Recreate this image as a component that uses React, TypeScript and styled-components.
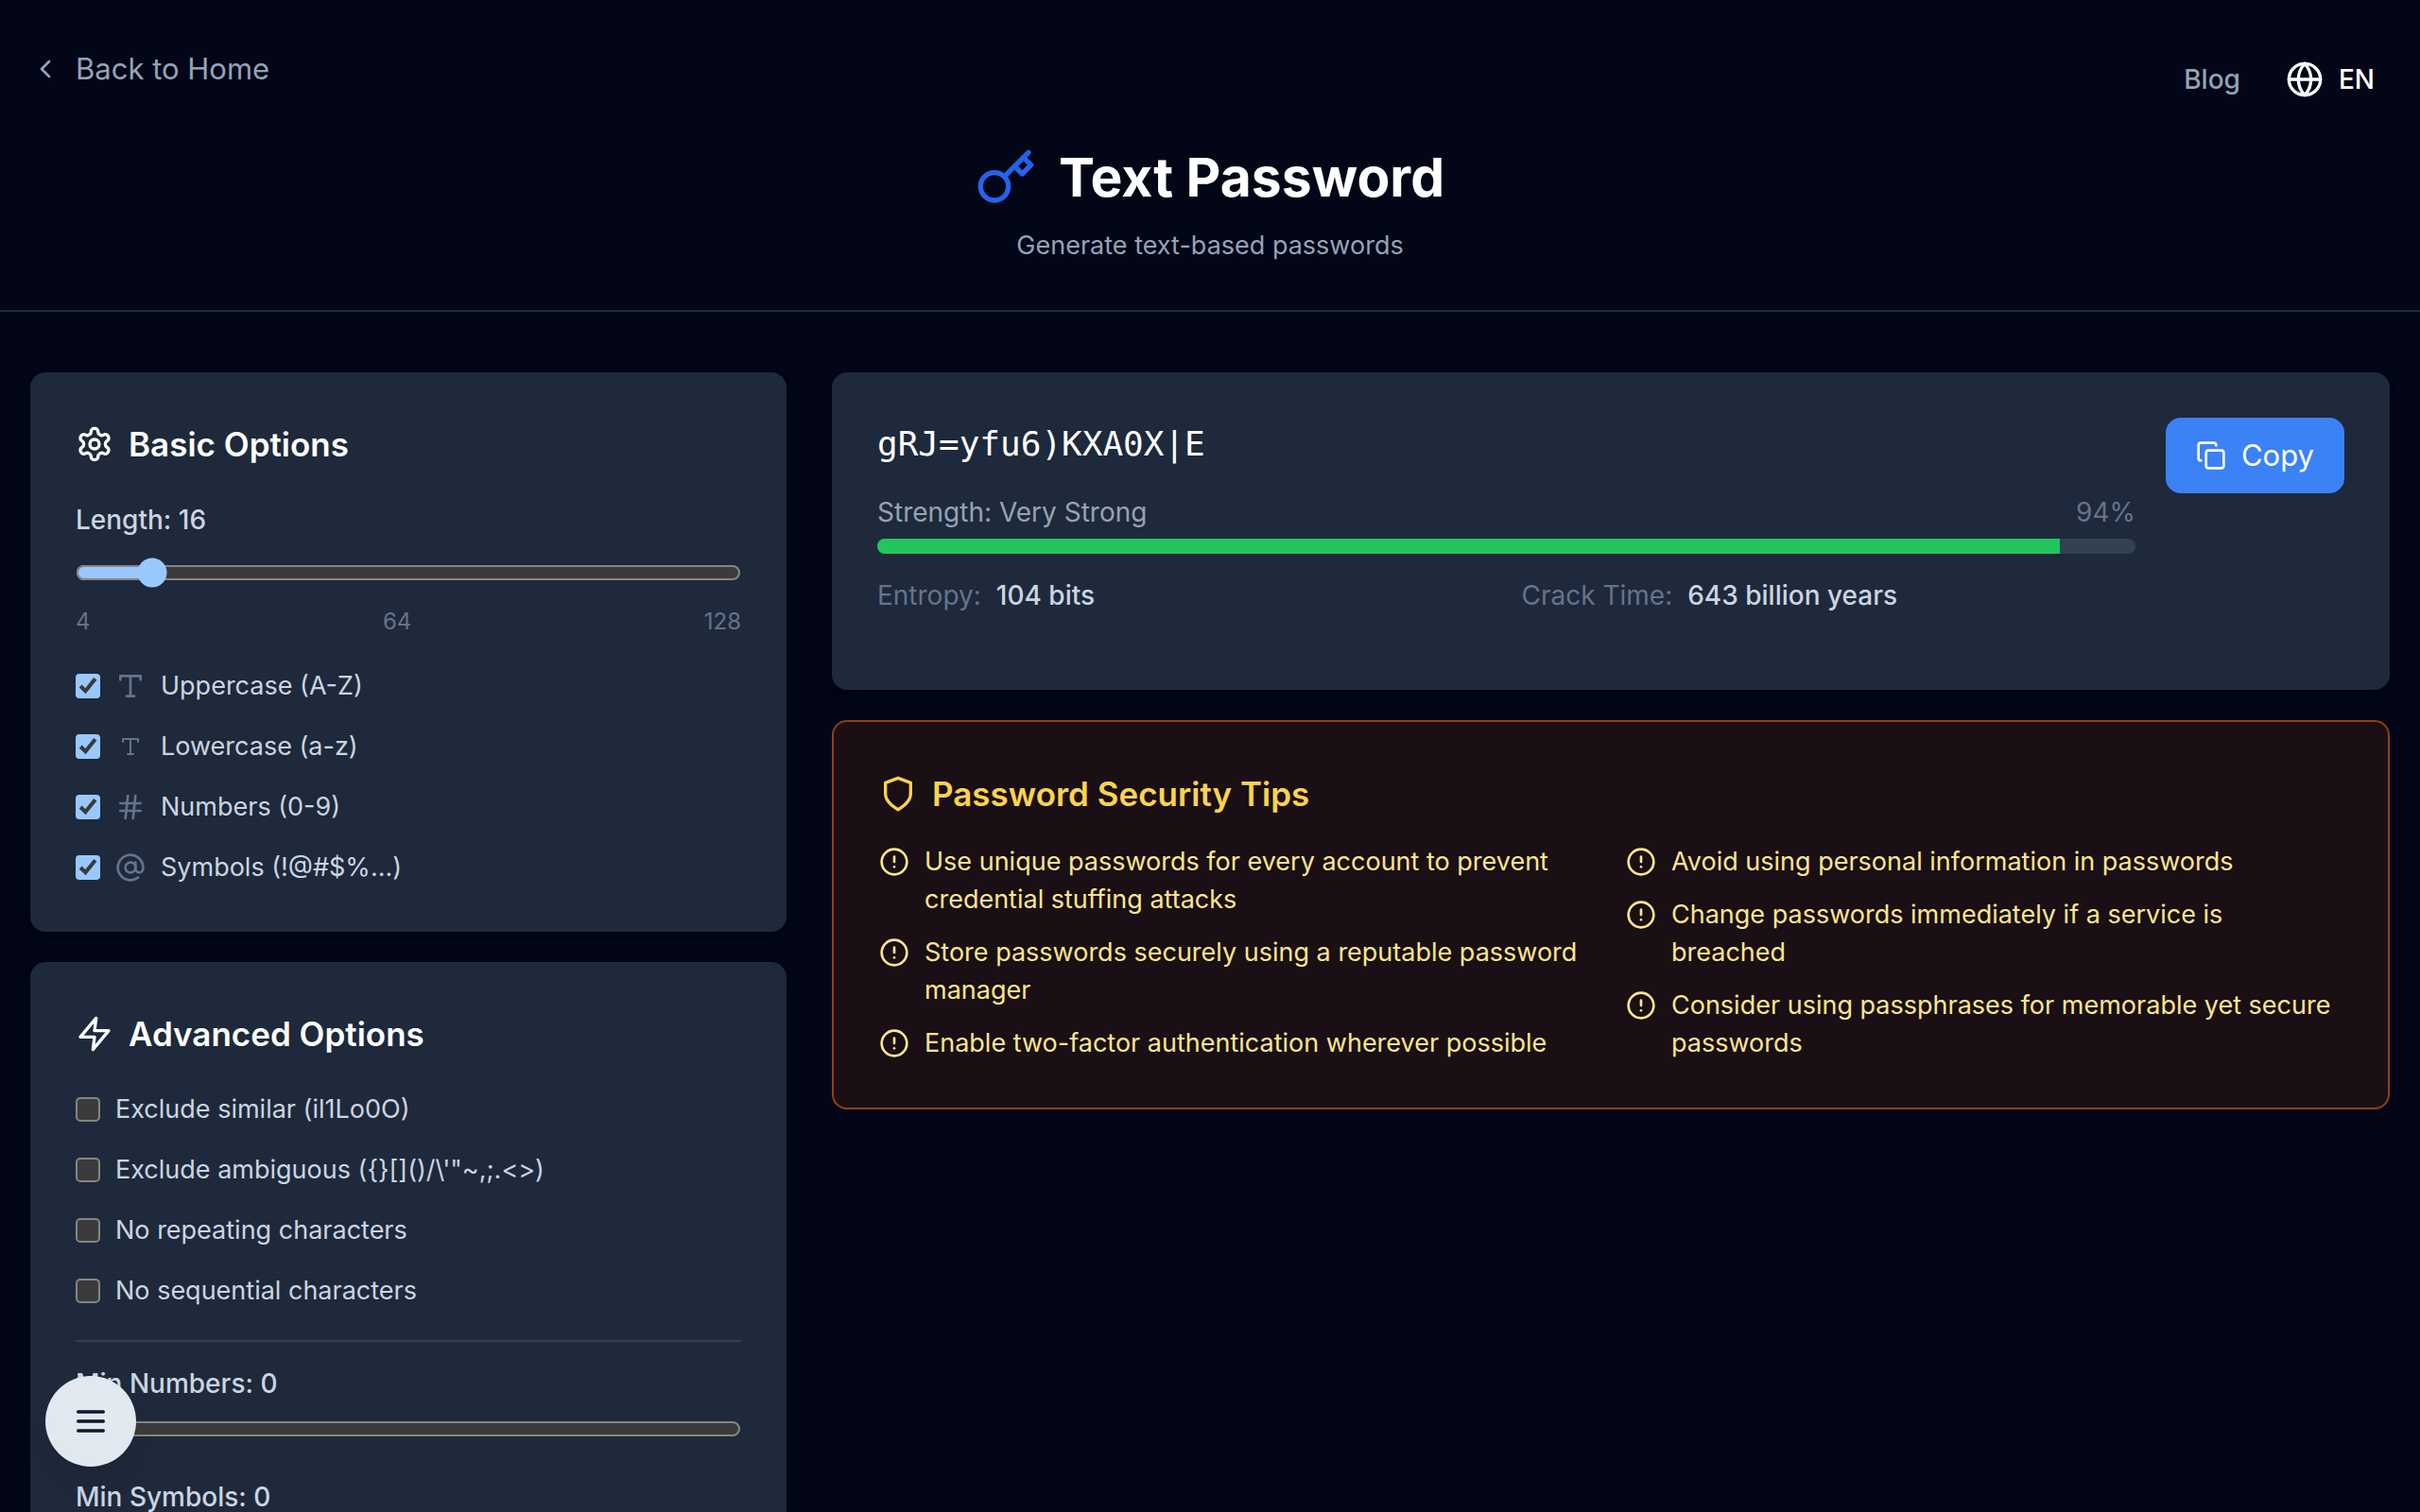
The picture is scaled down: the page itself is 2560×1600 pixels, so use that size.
import React, { useState } from "react";
import styled, { createGlobalStyle } from "styled-components";
import { AtSign, ChevronLeft, CircleAlert, Copy, Globe, Hash } from "lucide-react";

const GlobalStyle = createGlobalStyle`
  *, *::before, *::after { box-sizing: border-box; }
  html { background: #020617; scrollbar-width: none; }
  body {
    margin: 0;
    background: #020617;
    color: #ffffff;
    font-family: Inter, "Liberation Sans", sans-serif;
    font-size: 28px;
    line-height: 40px;
    -webkit-font-smoothing: antialiased;
  }
  h1, h2, p, ul { margin: 0; padding: 0; }
  ul { list-style: none; }
  a { text-decoration: none; }
  button { border: 0; font: inherit; cursor: pointer; }
  svg { display: block; flex: none; }
`;

const Header = styled.header`
  padding: 48px 32px;
  border-bottom: 2px solid #1e293b;
`;

const TopBar = styled.div`
  display: flex;
  justify-content: space-between;
  align-items: flex-start;
  margin-bottom: 32px;
`;

const BackLink = styled.a`
  display: flex;
  align-items: center;
  gap: 16px;
  color: #94a3b8;
  font-size: 31px;
  line-height: 50px;
`;

const Nav = styled.nav`
  display: flex;
  align-items: center;
  gap: 48px;
  height: 72px;
  padding-right: 16px;
  font-weight: 500;
`;

const NavLink = styled.a`
  color: #94a3b8;
`;

const LanguageButton = styled.button`
  display: flex;
  align-items: center;
  gap: 16px;
  padding: 0;
  background: none;
  color: #ffffff;
`;

const Hero = styled.div`
  display: flex;
  flex-direction: column;
  align-items: center;
  gap: 16px;
`;

const PageTitle = styled.h1`
  display: flex;
  align-items: center;
  gap: 24px;
  font-size: 57px;
  line-height: 72px;
  font-weight: 700;

  svg { color: #2563eb; }
`;

const Subtitle = styled.p`
  color: #94a3b8;
  font-size: 27px;
`;

const Main = styled.main`
  display: grid;
  grid-template-columns: repeat(3, minmax(0, 1fr));
  align-items: start;
  gap: 48px;
  padding: 64px 32px;
`;

const Column = styled.div<{ $span?: number }>`
  grid-column: span ${({ $span = 1 }) => $span};
  display: flex;
  flex-direction: column;
  gap: 32px;
`;

const Card = styled.section`
  padding: 48px;
  border-radius: 16px;
  background: #1e293b;
  box-shadow: 0 8px 12px -2px rgba(0, 0, 0, 0.3), 0 4px 8px -4px rgba(0, 0, 0, 0.3);
`;

const TipsCard = styled(Card)`
  border: 2px solid #92400e;
  background: rgba(120, 53, 15, 0.2);
  box-shadow: none;
  color: #fde68a;
`;

const CardTitle = styled.h2<{ $color?: string; $gap?: number }>`
  display: flex;
  align-items: center;
  gap: 16px;
  margin-bottom: ${({ $gap = 32 }) => $gap}px;
  color: ${({ $color = "#ffffff" }) => $color};
  font-size: 35px;
  line-height: 56px;
  font-weight: 600;
`;

const FieldLabel = styled.label`
  display: block;
  color: #cbd5e1;
  font-weight: 500;
`;

const Slider = styled.input.attrs({ type: "range" })`
  display: block;
  zoom: 2;
  width: 100%;
  height: 16px;
  margin: 0;
  color-scheme: dark;
`;

const SliderBox = styled.div<{ $top: number; $bottom: number }>`
  padding: ${({ $top }) => $top}px 0 ${({ $bottom }) => $bottom}px;
`;

const Scale = styled.div`
  display: flex;
  justify-content: space-between;
  margin-bottom: 32px;
  color: #64748b;
  font-size: 24px;
  line-height: 32px;
`;

const Options = styled.div`
  display: flex;
  flex-direction: column;
  gap: 24px;
`;

const OptionRow = styled.label`
  display: flex;
  align-items: center;
  gap: 16px;
  color: #cbd5e1;
  font-size: 27px;
`;

const Checkbox = styled.input.attrs({ type: "checkbox" })`
  zoom: 2;
  flex: none;
  width: 13px;
  height: 13px;
  margin: 0;
  color-scheme: dark;
`;

const IconSlot = styled.span`
  display: flex;
  align-items: center;
  justify-content: center;
  width: 32px;
  height: 32px;
  color: #64748b;
`;

const Minimums = styled.div`
  margin-top: 32px;
  padding-top: 24px;
  border-top: 2px solid #334155;
`;

const ResultCard = styled(Card)`
  display: flex;
  align-items: flex-start;
  gap: 32px;
  padding-bottom: 80px;
`;

const Result = styled.div`
  flex: 1;
  min-width: 0;
`;

const Password = styled.p`
  margin-bottom: 24px;
  font-family: "DejaVu Sans Mono", monospace;
  font-size: 36px;
  line-height: 56px;
`;

const StrengthRow = styled.div`
  display: flex;
  justify-content: space-between;
  margin-bottom: 8px;
  color: #94a3b8;
`;

const Muted = styled.span`
  color: #64748b;
`;

const Meter = styled.div`
  height: 16px;
  margin-bottom: 24px;
  border-radius: 8px;
  background: #334155;
  overflow: hidden;
`;

const MeterFill = styled.div`
  height: 100%;
  background: #22c55e;
`;

const Stats = styled.div`
  display: grid;
  grid-template-columns: 1fr 1fr;
  gap: 32px;
`;

const Stat = styled.div`
  display: flex;
  gap: 16px;
`;

const StatValue = styled.span`
  color: #cbd5e1;
  font-weight: 500;
`;

const CopyButton = styled.button`
  display: flex;
  align-items: center;
  gap: 16px;
  padding: 16px 32px;
  border-radius: 16px;
  background: #3b82f6;
  color: #ffffff;
  font-size: 31px;
  line-height: 48px;
`;

const TipsGrid = styled.div`
  display: grid;
  grid-template-columns: 1fr 1fr;
  gap: 32px;
`;

const TipList = styled.ul`
  display: flex;
  flex-direction: column;
  gap: 16px;
`;

const Tip = styled.li`
  display: flex;
  align-items: flex-start;
  gap: 16px;
  font-size: 27px;

  svg { margin-top: 4px; }
`;

const MenuButton = styled.button`
  position: fixed;
  left: 48px;
  bottom: 48px;
  display: flex;
  align-items: center;
  justify-content: center;
  width: 96px;
  height: 96px;
  padding: 0;
  border-radius: 50%;
  background: #e2e8f0;
  color: #0f172a;
  box-shadow: 0 20px 30px -6px rgba(0, 0, 0, 0.1), 0 8px 12px -8px rgba(0, 0, 0, 0.1);
`;

function StrokeIcon({ size, children }: { size: number; children: React.ReactNode }) {
  return (
    <svg
      width={size}
      height={size}
      viewBox="0 0 24 24"
      fill="none"
      stroke="currentColor"
      strokeWidth="2"
      strokeLinecap="round"
      strokeLinejoin="round"
      aria-hidden="true"
    >
      {children}
    </svg>
  );
}

const KeyIcon = ({ size }: { size: number }) => (
  <StrokeIcon size={size}>
    <circle cx="7.5" cy="15.5" r="5.5" />
    <path d="m21 2-9.6 9.6" />
    <path d="m15.5 7.5 3 3L22 7l-3-3" />
  </StrokeIcon>
);

const GearIcon = ({ size }: { size: number }) => (
  <StrokeIcon size={size}>
    <path d="M12.22 2h-.44a2 2 0 0 0-2 2v.18a2 2 0 0 1-1 1.73l-.43.25a2 2 0 0 1-2 0l-.15-.08a2 2 0 0 0-2.73.73l-.22.38a2 2 0 0 0 .73 2.73l.15.1a2 2 0 0 1 1 1.72v.51a2 2 0 0 1-1 1.74l-.15.09a2 2 0 0 0-.73 2.73l.22.38a2 2 0 0 0 2.73.73l.15-.08a2 2 0 0 1 2 0l.43.25a2 2 0 0 1 1 1.73V20a2 2 0 0 0 2 2h.44a2 2 0 0 0 2-2v-.18a2 2 0 0 1 1-1.73l.43-.25a2 2 0 0 1 2 0l.15.08a2 2 0 0 0 2.73-.73l.22-.39a2 2 0 0 0-.73-2.73l-.15-.08a2 2 0 0 1-1-1.74v-.5a2 2 0 0 1 1-1.74l.15-.09a2 2 0 0 0 .73-2.73l-.22-.38a2 2 0 0 0-2.73-.73l-.15.08a2 2 0 0 1-2 0l-.43-.25a2 2 0 0 1-1-1.73V4a2 2 0 0 0-2-2z" />
    <circle cx="12" cy="12" r="3" />
  </StrokeIcon>
);

const ZapIcon = ({ size }: { size: number }) => (
  <StrokeIcon size={size}>
    <polygon points="13 2 3 14 12 14 11 22 21 10 12 10 13 2" />
  </StrokeIcon>
);

const ShieldIcon = ({ size }: { size: number }) => (
  <StrokeIcon size={size}>
    <path d="M12 22s8-4 8-10V5l-8-3-8 3v7c0 6 8 10 8 10" />
  </StrokeIcon>
);

const TypeIcon = ({ size }: { size: number }) => (
  <StrokeIcon size={size}>
    <polyline points="4 7 4 4 20 4 20 7" />
    <line x1="9" x2="15" y1="20" y2="20" />
    <line x1="12" x2="12" y1="4" y2="20" />
  </StrokeIcon>
);

const MenuIcon = ({ size }: { size: number }) => (
  <StrokeIcon size={size}>
    <line x1="4" x2="20" y1="6" y2="6" />
    <line x1="4" x2="20" y1="12" y2="12" />
    <line x1="4" x2="20" y1="18" y2="18" />
  </StrokeIcon>
);

const characterSets = [
  { label: "Uppercase (A-Z)", icon: <TypeIcon size={32} /> },
  { label: "Lowercase (a-z)", icon: <TypeIcon size={24} /> },
  { label: "Numbers (0-9)", icon: <Hash size={32} /> },
  { label: "Symbols (!@#$%...)", icon: <AtSign size={32} /> },
];

const restrictions = [
  "Exclude similar (il1Lo0O)",
  "Exclude ambiguous ({}[]()/\\'\"~,;.<>)",
  "No repeating characters",
  "No sequential characters",
];

const tips = [
  [
    "Use unique passwords for every account to prevent credential stuffing attacks",
    "Store passwords securely using a reputable password manager",
    "Enable two-factor authentication wherever possible",
  ],
  [
    "Avoid using personal information in passwords",
    "Change passwords immediately if a service is breached",
    "Consider using passphrases for memorable yet secure passwords",
  ],
];

export default function App() {
  const [length, setLength] = useState(16);
  const [minNumbers, setMinNumbers] = useState(0);
  const [minSymbols, setMinSymbols] = useState(0);
  const strength = 94;

  return (
    <>
      <GlobalStyle />
      <Header>
        <TopBar>
          <BackLink href="#home">
            <ChevronLeft size={32} />
            Back to Home
          </BackLink>
          <Nav>
            <NavLink href="#blog">Blog</NavLink>
            <LanguageButton type="button">
              <Globe size={40} />
              EN
            </LanguageButton>
          </Nav>
        </TopBar>
        <Hero>
          <PageTitle>
            <KeyIcon size={64} />
            Text Password
          </PageTitle>
          <Subtitle>Generate text-based passwords</Subtitle>
        </Hero>
      </Header>

      <Main>
        <Column>
          <Card>
            <CardTitle>
              <GearIcon size={40} />
              Basic Options
            </CardTitle>
            <FieldLabel htmlFor="length">Length: {length}</FieldLabel>
            <SliderBox $top={20} $bottom={20}>
              <Slider
                id="length"
                min={4}
                max={128}
                value={length}
                onChange={(e) => setLength(Number(e.target.value))}
              />
            </SliderBox>
            <Scale>
              <span>4</span>
              <span>64</span>
              <span>128</span>
            </Scale>
            <Options>
              {characterSets.map(({ label, icon }) => (
                <OptionRow key={label}>
                  <Checkbox defaultChecked />
                  <IconSlot>{icon}</IconSlot>
                  {label}
                </OptionRow>
              ))}
            </Options>
          </Card>

          <Card>
            <CardTitle>
              <ZapIcon size={40} />
              Advanced Options
            </CardTitle>
            <Options>
              {restrictions.map((label) => (
                <OptionRow key={label}>
                  <Checkbox />
                  {label}
                </OptionRow>
              ))}
            </Options>
            <Minimums>
              <FieldLabel htmlFor="min-numbers">Min Numbers: {minNumbers}</FieldLabel>
              <SliderBox $top={12} $bottom={36}>
                <Slider
                  id="min-numbers"
                  min={0}
                  max={10}
                  value={minNumbers}
                  onChange={(e) => setMinNumbers(Number(e.target.value))}
                />
              </SliderBox>
              <FieldLabel htmlFor="min-symbols">Min Symbols: {minSymbols}</FieldLabel>
              <SliderBox $top={12} $bottom={12}>
                <Slider
                  id="min-symbols"
                  min={0}
                  max={10}
                  value={minSymbols}
                  onChange={(e) => setMinSymbols(Number(e.target.value))}
                />
              </SliderBox>
            </Minimums>
          </Card>
        </Column>

        <Column $span={2}>
          <ResultCard>
            <Result>
              <Password>gRJ=yfu6)KXA0X|E</Password>
              <StrengthRow>
                <span>Strength: Very Strong</span>
                <Muted>{strength}%</Muted>
              </StrengthRow>
              <Meter>
                <MeterFill style={{ width: `${strength}%` }} />
              </Meter>
              <Stats>
                <Stat>
                  <Muted>Entropy:</Muted>
                  <StatValue>104 bits</StatValue>
                </Stat>
                <Stat>
                  <Muted>Crack Time:</Muted>
                  <StatValue>643 billion years</StatValue>
                </Stat>
              </Stats>
            </Result>
            <CopyButton type="button">
              <Copy size={32} />
              Copy
            </CopyButton>
          </ResultCard>

          <TipsCard>
            <CardTitle $color="#fcd34d" $gap={24}>
              <ShieldIcon size={40} />
              Password Security Tips
            </CardTitle>
            <TipsGrid>
              {tips.map((list) => (
                <TipList key={list[0]}>
                  {list.map((text) => (
                    <Tip key={text}>
                      <CircleAlert size={32} />
                      <span>{text}</span>
                    </Tip>
                  ))}
                </TipList>
              ))}
            </TipsGrid>
          </TipsCard>
        </Column>
      </Main>

      <MenuButton type="button" aria-label="Open menu">
        <MenuIcon size={40} />
      </MenuButton>
    </>
  );
}
